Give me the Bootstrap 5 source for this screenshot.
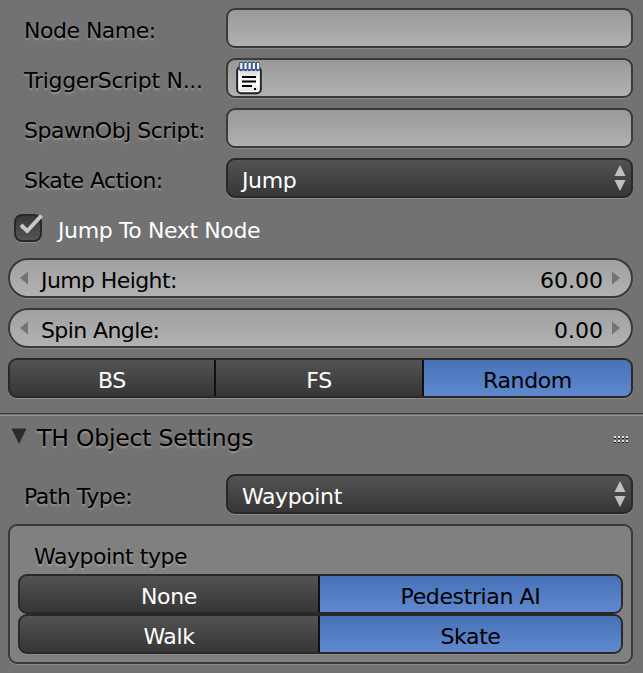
<!DOCTYPE html>
<html lang="en">
<head>
<meta charset="utf-8">
<meta name="viewport" content="width=device-width, initial-scale=1">
<title>TH Object Settings</title>
<link href="https://cdn.jsdelivr.net/npm/bootstrap@5.3.0/dist/css/bootstrap.min.css" rel="stylesheet">
<style>
body{background:#727272;color:#000;font:22px/38px "DejaVu Sans",sans-serif;letter-spacing:-.38px;overflow:hidden;height:673px}
.panel-top{padding:8px 10px 0 8px}
.prop-stack{display:grid;gap:10px}
.prop-row{display:grid;grid-template-columns:218px 1fr;height:40px}
.path-row{margin:0 10px 0 8px}
.prop-label{padding:4px 0 0 16px;white-space:nowrap;text-shadow:0 2px 2px #999;letter-spacing:-.5px}
.label-cut{letter-spacing:-.3px}
.fld{height:40px;border:2px solid #3a3a3a;border-radius:9px;background:linear-gradient(#999,#b1b1b1);box-shadow:0 1px 0 #8b8b8b;line-height:40px}
.fld-menu{background:linear-gradient(#535353,#363636);border-color:#292929;color:#fff;padding:1px 4px 0 14px}
.fld-num{border-radius:20px;background:linear-gradient(#a0a0a0,#b2b2b2);padding:1px 10px 0 9px;letter-spacing:-.6px}
.num-label{padding-left:13px}
.num-value{padding-right:9px;letter-spacing:0}
.seg{height:40px;border-radius:9px;border:2px solid #292929;background:linear-gradient(#535353,#363636);overflow:hidden;color:#fff;text-align:center;box-shadow:0 1px 0 #8b8b8b;line-height:41px}
.seg > div + div{border-left:2px solid #111}
.seg .on{background:linear-gradient(#4772b8,#638bd0);color:#000}
.seg3{display:grid;grid-template-columns:204px 208px 1fr}
.seg2{display:grid;grid-template-columns:298px 1fr}
.check-row{height:40px}
.tick{width:28px;height:28px;border:2px solid #292929;border-radius:8px;background:linear-gradient(#393939,#555);box-shadow:0 1px 0 #8b8b8b;margin:6px 0 0 6px}
.tick svg{display:block;overflow:visible}
.rule{height:3px;margin-top:15px;border-top:1px solid #3a3a3a;border-bottom:1px solid #999}
.head{height:58px;padding:3px 12px 0 11px;font-size:23.5px}
.head-title{padding:0 0 0 10px;letter-spacing:-.2px}
.group-box{height:140px;margin:10px 10px 0 8px;padding:8px;border:2px solid #3a3a3a;border-radius:9px;background:#808080;box-shadow:0 1px 0 #8b8b8b}
.group-title{height:40px;padding:4px 0 0 16px;text-shadow:0 2px 2px #a0a0a0;letter-spacing:-.46px}
svg{flex:none}
</style>
<script src="https://cdn.jsdelivr.net/npm/bootstrap@5.3.0/dist/js/bootstrap.bundle.min.js"></script>
</head>
<body>
<main>
<section class="panel-top prop-stack">
  <div class="prop-row"><div class="prop-label">Node Name:</div><div class="fld"></div></div>
  <div class="prop-row"><div class="prop-label label-cut">TriggerScript N...</div>
    <div class="fld d-flex ps-2"><svg width="28" height="36" viewBox="0 -1 28 36">
      <defs><linearGradient id="paper" x2="0" y2="1"><stop stop-color="#ccc"/><stop offset=".6" stop-color="#fff"/><stop offset="1" stop-color="#ddd"/></linearGradient></defs>
      <rect x="1.200" y="6" width="23.600" height="26.200" rx="4" fill="url(#paper)" stroke="#222" stroke-width="2"/>
      <path d="M3.200 9V29Q3.200 30.500 5 30.500H21Q22.800 30.500 22.800 29V9" fill="none" stroke="#fff" stroke-width="1.200"/>
      <path d="M6 16H20M6 20.500H20M6 25H16" stroke="#000" stroke-width="2"/><path d="M18 27h2v2h-2z"/>
      <path d="M5 3V8M9.200 3V8M13.400 3V8M17.600 3V8M21.800 3V8" stroke="#3e5a8c" stroke-width="4.400" stroke-linecap="round"/>
      <path d="M5.300 2V8M9.500 2V8M13.700 2V8M17.900 2V8M22.100 2V8" stroke="#f4f7ff" stroke-width="2.200"/>
    </svg></div></div>
  <div class="prop-row"><div class="prop-label">SpawnObj Script:</div><div class="fld"></div></div>
  <div class="prop-row"><div class="prop-label">Skate Action:</div>
    <div class="fld fld-menu d-flex justify-content-between"><span>Jump</span><svg width="14" height="36" viewBox="0 0 14 36"><path d="M1.500 15 7 4 12.500 15zM1.500 19H12.500L7 30z" fill="#c0c0c0"/></svg></div></div>
  <div class="check-row d-flex"><div class="tick"><svg width="24" height="24"><path d="M5 9 11.200 15 25.500 -.5" fill="none" stroke="#c8c8c8" stroke-width="4"/></svg></div><span class="text-white ms-3 pt-1">Jump To Next Node</span></div>
  <div class="fld fld-num d-flex"><svg width="9" height="34"><path d="M9 10.500V23.500L1 17z" fill="#747474"/></svg><span class="num-label flex-grow-1">Jump Height:</span><span class="num-value">60.00</span><svg width="9" height="34"><path d="M0 10.500V23.500L8 17z" fill="#747474"/></svg></div>
  <div class="fld fld-num d-flex"><svg width="9" height="34"><path d="M9 10.500V23.500L1 17z" fill="#747474"/></svg><span class="num-label flex-grow-1">Spin Angle:</span><span class="num-value">0.00</span><svg width="9" height="34"><path d="M0 10.500V23.500L8 17z" fill="#747474"/></svg></div>
  <div class="seg seg3"><div>BS</div><div>FS</div><div class="on">Random</div></div>
</section>
<div class="rule"></div>
<header class="head d-flex"><svg width="16" height="30"><path d="M.5 9.500H15.500L8 25z" fill="#2b2b2b"/></svg><span class="prop-label head-title flex-grow-1">TH Object Settings</span>
  <svg class="mt-3" width="18" height="12" shape-rendering="crispEdges"><path d="M1 2h2M5 2h2M9 2h2M13 2h2M1 6h2M5 6h2M9 6h2M13 6h2" stroke="#ddd" stroke-width="2"/><path d="M1 3.500h2m2 0h2m2 0h2m2 0h2M1 7.500h2m2 0h2m2 0h2m2 0h2" stroke="#222"/></svg></header>
<div class="prop-row path-row"><div class="prop-label">Path Type:</div>
  <div class="fld fld-menu d-flex justify-content-between"><span>Waypoint</span><svg width="14" height="36" viewBox="0 0 14 36"><path d="M1.500 15 7 4 12.500 15zM1.500 19H12.500L7 30z" fill="#c0c0c0"/></svg></div></div>
<section class="group-box">
  <div class="group-title">Waypoint type</div>
  <div class="seg seg2"><div>None</div><div class="on">Pedestrian AI</div></div>
  <div class="seg seg2"><div>Walk</div><div class="on">Skate</div></div>
</section>
</main>
</body>
</html>
